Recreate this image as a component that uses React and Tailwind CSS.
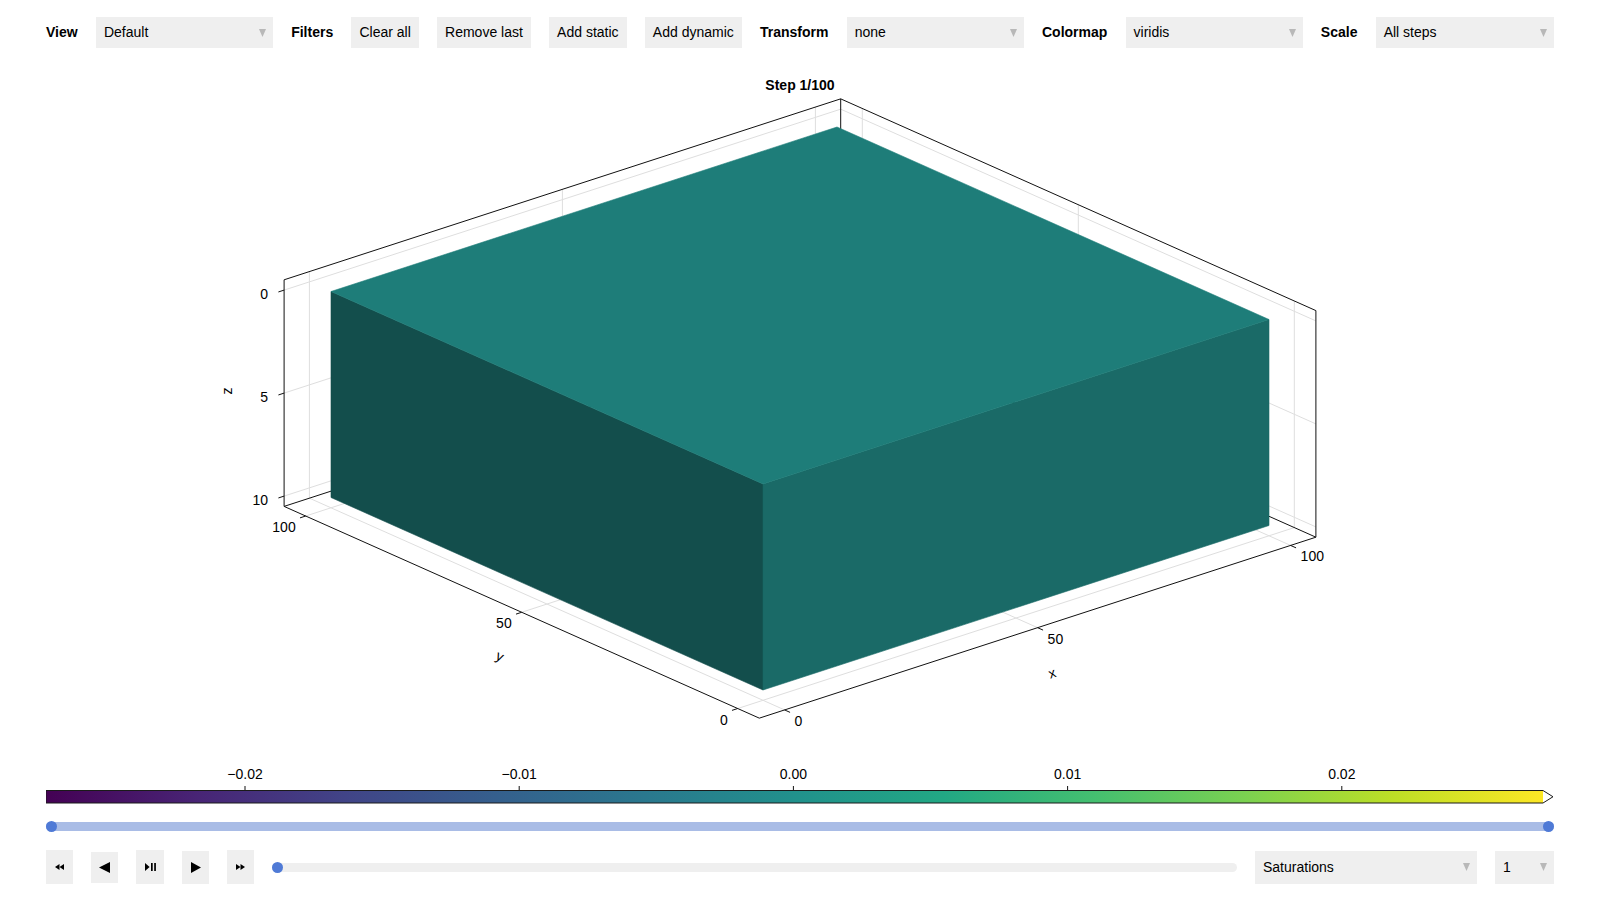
import React from 'react';

// orthographic projection of the Axis3 (x,y in 0..100, z in 0..10, z grows downward on screen)
const P = (x, y, z) => [763 + 5.06 * x - 4.32 * y, 484 - 1.645 * x - 1.925 * y + 20.6 * z];
const pts = (list) => list.map((p) => `${p[0].toFixed(1)},${p[1].toFixed(1)}`).join(' ');

const VIRIDIS = ['#440154', '#482475', '#414487', '#355f8d', '#2a788e', '#21918c', '#22a884', '#44bf70', '#7ad151', '#bddf26', '#fde725'];
const TICKS = [0, 50, 100];
const ZTICKS = [0, 5, 10];

function Caret() {
  return (
    <svg width="7" height="8" viewBox="0 0 7 8" className="shrink-0">
      <polygon points="0,0 7,0 3.5,8" fill="#b8b8b8" />
    </svg>
  );
}

function Select({ value, className = '' }) {
  return (
    <div className={`flex items-center justify-between bg-[#efefef] pl-2 pr-[7px] ${className}`}>
      <span>{value}</span>
      <Caret />
    </div>
  );
}

function Btn({ children }) {
  return <div className="flex h-[31px] items-center bg-[#efefef] px-2">{children}</div>;
}

function Plot() {
  const grid = [];
  TICKS.forEach((x) => grid.push([P(x, 105, -0.5), P(x, 105, 10.5)]));
  ZTICKS.forEach((z) => grid.push([P(-5, 105, z), P(105, 105, z)]));
  TICKS.forEach((y) => grid.push([P(105, y, -0.5), P(105, y, 10.5)]));
  ZTICKS.forEach((z) => grid.push([P(105, -5, z), P(105, 105, z)]));
  TICKS.forEach((x) => grid.push([P(x, -5, 10.5), P(x, 105, 10.5)]));
  TICKS.forEach((y) => grid.push([P(-5, y, 10.5), P(105, y, 10.5)]));

  const A = P(105, 105, -0.5), B = P(-5, 105, -0.5), C = P(105, -5, -0.5);
  const A2 = P(105, 105, 10.5), B2 = P(-5, 105, 10.5), C2 = P(105, -5, 10.5), D = P(-5, -5, 10.5);
  const frame = [[A, B], [A, C], [A, A2], [B, B2], [C, C2], [B2, D], [D, C2], [B2, A2], [C2, A2]];

  const top = [P(0, 0, 0), P(100, 0, 0), P(100, 100, 0), P(0, 100, 0)];
  const left = [P(0, 0, 0), P(0, 100, 0), P(0, 100, 10), P(0, 0, 10)];
  const right = [P(0, 0, 0), P(100, 0, 0), P(100, 0, 10), P(0, 0, 10)];

  const ex = [-0.951, 0.309];
  const ey = [0.913, 0.407];

  return (
    <svg width="1508" height="712" viewBox="46 48 1508 712" className="block shrink-0">
      <text x="800" y="85" textAnchor="middle" dominantBaseline="central" fontSize="14" fontWeight="bold" fill="#000">
        Step 1/100
      </text>
      {grid.map(([p, q], i) => (
        <line key={i} x1={p[0]} y1={p[1]} x2={q[0]} y2={q[1]} stroke="#dedede" strokeWidth="1" />
      ))}
      {frame.map(([p, q], i) => (
        <line key={i} x1={p[0]} y1={p[1]} x2={q[0]} y2={q[1]} stroke="#111" strokeWidth="1" />
      ))}
      <polygon points={pts(left)} fill="#134e4c" stroke="#134e4c" strokeWidth="0.6" />
      <polygon points={pts(right)} fill="#1a6a67" stroke="#1a6a67" strokeWidth="0.6" />
      <polygon points={pts(top)} fill="#1e7d79" stroke="#1e7d79" strokeWidth="0.6" />

      {ZTICKS.map((z) => {
        const t = P(-5, 105, z);
        return (
          <g key={z}>
            <line x1={t[0]} y1={t[1]} x2={t[0] + 6 * ex[0]} y2={t[1] + 6 * ex[1]} stroke="#111" />
            <text x="268" y={t[1] + 4} textAnchor="end" dominantBaseline="central" fontSize="14" fill="#000">{z}</text>
          </g>
        );
      })}
      {TICKS.map((y) => {
        const t = P(-5, y, 10.5);
        return (
          <g key={y}>
            <line x1={t[0]} y1={t[1]} x2={t[0] + 6 * ex[0]} y2={t[1] + 6 * ex[1]} stroke="#111" />
            <text x={t[0] - 10} y={t[1] + 11} textAnchor="end" dominantBaseline="central" fontSize="14" fill="#000">{y}</text>
          </g>
        );
      })}
      {TICKS.map((x) => {
        const t = P(x, -5, 10.5);
        return (
          <g key={x}>
            <line x1={t[0]} y1={t[1]} x2={t[0] + 6 * ey[0]} y2={t[1] + 6 * ey[1]} stroke="#111" />
            <text x={t[0] + 10} y={t[1] + 11} dominantBaseline="central" fontSize="14" fill="#000">{x}</text>
          </g>
        );
      })}
      <text x="226.5" y="391" textAnchor="middle" dominantBaseline="central" fontSize="14" transform="rotate(-90 226.5 391)">z</text>
      <text x="500" y="656" textAnchor="middle" dominantBaseline="central" fontSize="14" transform="rotate(24.5 500 656)">y</text>
      <text x="1052" y="673" textAnchor="middle" dominantBaseline="central" fontSize="14" transform="rotate(-18 1052 673)">x</text>
    </svg>
  );
}

function Colorbar() {
  const labels = ['\u22120.02', '\u22120.01', '0.00', '0.01', '0.02'];
  return (
    <svg width="1508" height="50" viewBox="46 760 1508 50" className="block shrink-0">
      <defs>
        <linearGradient id="viridis" x1="0" x2="1" y1="0" y2="0">
          {VIRIDIS.map((c, i) => (
            <stop key={i} offset={i / 10} stopColor={c} />
          ))}
        </linearGradient>
      </defs>
      {labels.map((l, i) => {
        const x = 245 + i * 274.2;
        return (
          <g key={l}>
            <text x={x} y="774" textAnchor="middle" dominantBaseline="central" fontSize="14" fill="#000">{l}</text>
            <line x1={x} y1="786" x2={x} y2="790.5" stroke="#111" />
          </g>
        );
      })}
      <rect x="46" y="790.5" width="1497" height="12.5" fill="url(#viridis)" />
      <polygon points="46,790.5 1543,790.5 1553,796.75 1543,803 46,803" fill="none" stroke="#1a1a1a" strokeWidth="1" />
    </svg>
  );
}

function Dot({ className = '' }) {
  return <span className={`h-[11px] w-[11px] rounded-full bg-[#4f7ad6] ${className}`} />;
}

function Icon({ kind }) {
  if (kind === 'rew')
    return (
      <svg width="9" height="6" viewBox="0 0 9 6"><polygon points="4.5,0 0,3 4.5,6" /><polygon points="9,0 4.5,3 9,6" /></svg>
    );
  if (kind === 'ff')
    return (
      <svg width="9" height="6" viewBox="0 0 9 6"><polygon points="0,0 4.5,3 0,6" /><polygon points="4.5,0 9,3 4.5,6" /></svg>
    );
  if (kind === 'back')
    return (
      <svg width="11" height="11" viewBox="0 0 11 11"><polygon points="11,0 0,5.5 11,11" /></svg>
    );
  if (kind === 'play')
    return (
      <svg width="10" height="11" viewBox="0 0 10 11"><polygon points="0,0 10,5.5 0,11" /></svg>
    );
  return (
    <svg width="11" height="8" viewBox="0 0 11 8">
      <polygon points="0,0 4.6,4 0,8" />
      <rect x="6" y="0" width="1.7" height="8" />
      <rect x="9.2" y="0" width="1.7" height="8" />
    </svg>
  );
}

const PLAYER = [
  { kind: 'rew', cls: 'w-[27px] h-[34px]' },
  { kind: 'back', cls: 'w-[27px] h-[31px]' },
  { kind: 'pp', cls: 'w-[28px] h-[34px]' },
  { kind: 'play', cls: 'w-[27px] h-[33px]' },
  { kind: 'ff', cls: 'w-[27px] h-[34px]' },
];

export default function App() {
  return (
    <div className="flex h-[900px] w-[1600px] flex-col overflow-hidden bg-white px-[46px] font-['Liberation_Sans',Arial,sans-serif] text-[14px] text-black">
      <div className="mt-[17px] flex h-[31px] shrink-0 items-center gap-[18.25px]">
        <span className="font-bold">View</span>
        <Select value="Default" className="h-[31px] w-[177px]" />
        <span className="font-bold">Filters</span>
        <Btn>Clear all</Btn>
        <Btn>Remove last</Btn>
        <Btn>Add static</Btn>
        <Btn>Add dynamic</Btn>
        <span className="font-bold">Transform</span>
        <Select value="none" className="h-[31px] w-[177px]" />
        <span className="font-bold">Colormap</span>
        <Select value="viridis" className="h-[31px] w-[177px]" />
        <span className="font-bold">Scale</span>
        <Select value="All steps" className="h-[31px] w-[178px]" />
      </div>

      <Plot />
      <Colorbar />

      <div className="flex h-[32px] shrink-0 items-center">
        <div className="relative flex h-[11px] w-full items-center">
          <div className="h-[9px] w-full rounded-full bg-[#a9bce6]" />
          <Dot className="absolute left-0 top-0" />
          <Dot className="absolute right-0 top-0" />
        </div>
      </div>

      <div className="mt-[8px] flex h-[34px] shrink-0 items-center gap-[18px]">
        {PLAYER.map((b) => (
          <div key={b.kind} className={`flex items-center justify-center bg-[#efefef] ${b.cls}`}>
            <Icon kind={b.kind} />
          </div>
        ))}
        <div className="relative flex h-[11px] flex-1 items-center">
          <div className="h-[9px] w-full rounded-full bg-[#efefef]" />
          <Dot className="absolute left-0 top-0" />
        </div>
        <Select value="Saturations" className="h-[33px] w-[222px]" />
        <Select value="1" className="h-[33px] w-[59px]" />
      </div>
    </div>
  );
}
